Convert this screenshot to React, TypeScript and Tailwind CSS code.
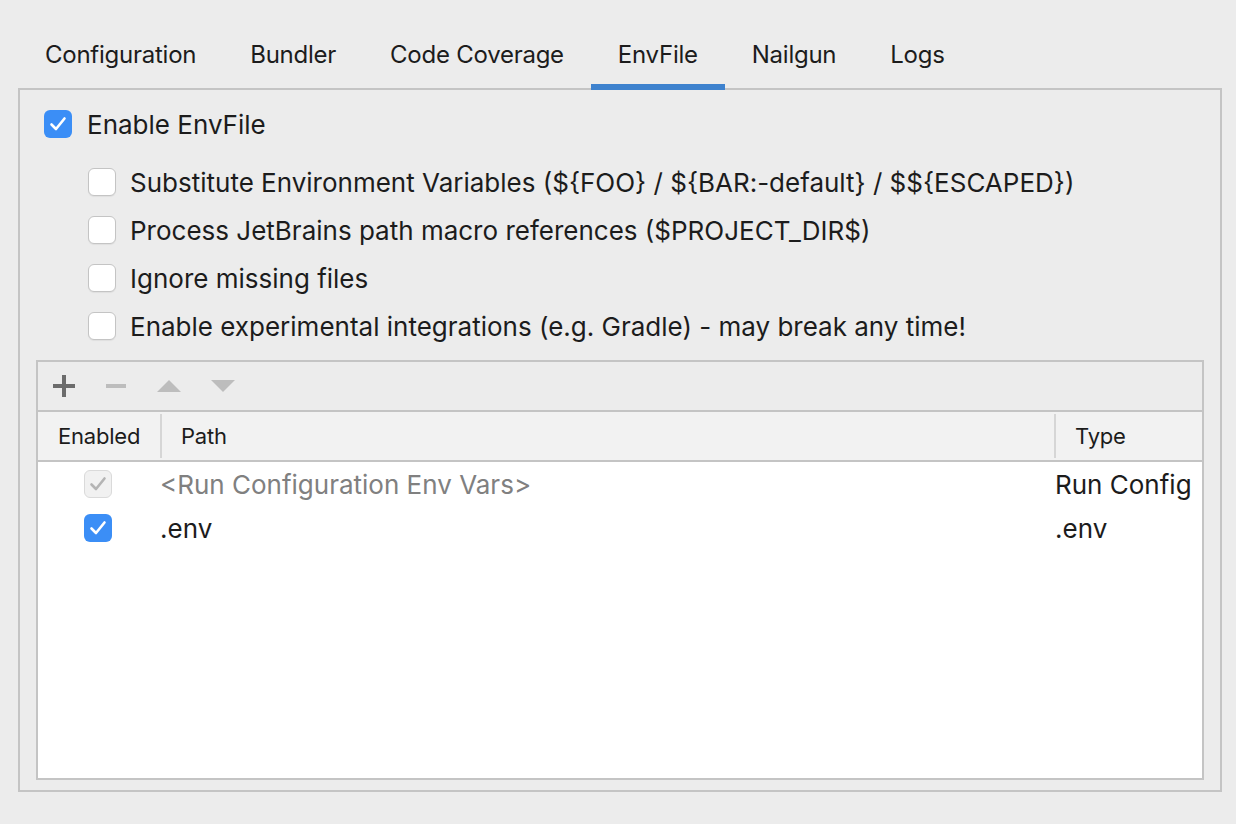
import React from "react";

const Check = ({ color }: { color: string }) => (
  <svg width="18" height="16" viewBox="0 0 18 16" fill="none">
    <path d="M2.5 8.5 L7 13 L15.5 2.5" stroke={color} strokeWidth="2.6" strokeLinecap="round" strokeLinejoin="round" />
  </svg>
);

const Box = ({ state }: { state: "on" | "off" | "disabled" }) => {
  if (state === "on")
    return (
      <div className="w-[28px] h-[28px] rounded-[6px] bg-[#3b8ef6] flex items-center justify-center shrink-0">
        <Check color="#ffffff" />
      </div>
    );
  if (state === "disabled")
    return (
      <div className="w-[28px] h-[28px] rounded-[6px] bg-[#f1f1f1] border border-[#dadada] flex items-center justify-center shrink-0">
        <Check color="#b4b4b4" />
      </div>
    );
  return (
    <div className="w-[28px] h-[28px] rounded-[6px] bg-white border border-[#c4c4c4] shadow-[0_1px_1px_rgba(0,0,0,0.06)] shrink-0" />
  );
};

const tabs = ["Configuration", "Bundler", "Code Coverage", "EnvFile", "Nailgun", "Logs"];

const options = [
  "Substitute Environment Variables (${FOO} / ${BAR:-default} / $${ESCAPED})",
  "Process JetBrains path macro references ($PROJECT_DIR$)",
  "Ignore missing files",
  "Enable experimental integrations (e.g. Gradle) - may break any time!",
];

export default function App() {
  return (
    <div
      className="w-[1236px] h-[824px] bg-[#ececec] text-[#1c1c1c] overflow-hidden pt-[20px]"
      style={{ fontFamily: "Inter, 'Liberation Sans', sans-serif" }}
    >
      <div className="flex pl-[18px] h-[70px] relative z-10">
        {tabs.map((t) => (
          <div key={t} className="relative h-full flex items-center text-[24px] tracking-[-0.25px] px-[27px]">
            {t}
            {t === "EnvFile" && <div className="absolute left-0 right-0 bottom-0 h-[6px] bg-[#3e82ce]" />}
          </div>
        ))}
      </div>
      <div className="-mt-[2px] ml-[18px] w-[1204px] h-[704px] border-2 border-[#c4c4c4] flex flex-col">
        <div className="flex items-center gap-[15px] pl-[24px] mt-[20px] h-[28px] text-[26px]">
          <Box state="on" />
          <span>Enable EnvFile</span>
        </div>
        <div className="flex flex-col gap-[20px] pl-[68px] pt-[30px] text-[26px]">
          {options.map((o) => (
            <div key={o} className="flex items-center gap-[14px] h-[28px]">
              <Box state="off" />
              <span>{o}</span>
            </div>
          ))}
        </div>
        <div className="mx-[16px] mt-[20px] mb-[10px] flex-1 border-2 border-[#c4c4c4] bg-white flex flex-col">
          <div className="h-[50px] bg-[#ececec] border-b-2 border-[#c4c4c4] flex items-center pl-[15px] gap-[30px]">
            <svg width="22" height="22" viewBox="0 0 22 22">
              <rect x="9" y="0" width="4" height="22" fill="#6c6c6c" />
              <rect x="0" y="9" width="22" height="4" fill="#6c6c6c" />
            </svg>
            <svg width="22" height="22" viewBox="0 0 22 22">
              <rect x="1" y="9" width="20" height="4" fill="#bdbdbd" />
            </svg>
            <svg width="24" height="22" viewBox="0 0 24 22">
              <path d="M0 17 L12 5 L24 17 Z" fill="#bdbdbd" />
            </svg>
            <svg width="24" height="22" viewBox="0 0 24 22">
              <path d="M0 5 L24 5 L12 17 Z" fill="#bdbdbd" />
            </svg>
          </div>
          <div className="h-[50px] bg-[#f2f2f2] border-b-2 border-[#c4c4c4] flex text-[22px] tracking-[-0.2px]">
            <div className="w-[122px] flex items-center pl-[20px]">Enabled</div>
            <div className="w-[2px] bg-[#d6d6d6] my-[2px]" />
            <div className="flex-1 flex items-center pl-[19px]">Path</div>
            <div className="w-[2px] bg-[#d6d6d6] my-[2px]" />
            <div className="w-[146px] flex items-center pl-[19px]">Type</div>
          </div>
          <div className="flex flex-col text-[26px]">
            <div className="h-[44px] flex items-center">
              <div className="w-[122px] flex justify-center pr-[2px]"><Box state="disabled" /></div>
              <div className="flex-1 text-[#808080]">{"<Run Configuration Env Vars>"}</div>
              <div className="w-[147px] whitespace-nowrap overflow-hidden">Run Config</div>
            </div>
            <div className="h-[44px] flex items-center">
              <div className="w-[122px] flex justify-center pr-[2px]"><Box state="on" /></div>
              <div className="flex-1">.env</div>
              <div className="w-[147px] whitespace-nowrap overflow-hidden">.env</div>
            </div>
          </div>
        </div>
      </div>
    </div>
  );
}
